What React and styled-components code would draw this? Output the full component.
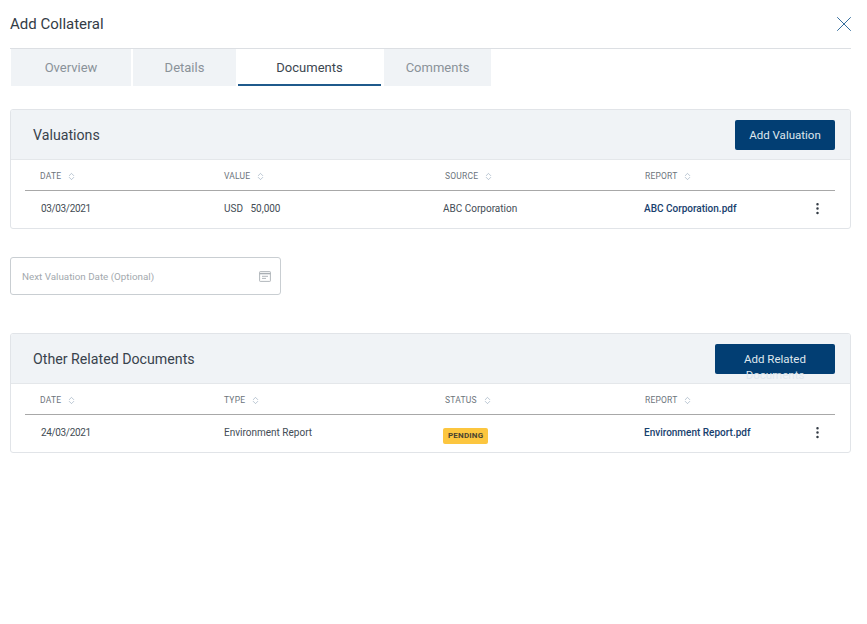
import React from 'react';
import styled, { createGlobalStyle } from 'styled-components';
import { X, EllipsisVertical, ChevronUp, ChevronDown } from 'lucide-react';

const GlobalStyle = createGlobalStyle`
    body {
        margin: 0;
        background: #ffffff;
        font-family: Roboto, "Noto Sans", sans-serif;
        color: #3c4650;
    }
`;

const Page = styled.div`
    width: 841px;
    padding: 0 16px 0 10px;
`;

const TitleBar = styled.header`
    height: 48px;
    display: flex;
    align-items: center;
    justify-content: space-between;
    border-bottom: 1px solid #dcdfe3;
`;

const Title = styled.h1`
    margin: 0;
    font-size: 15px;
    font-weight: 400;
    color: #333c46;
`;

const CloseButton = styled.button`
    border: 0;
    padding: 0;
    background: none;
    display: flex;
    margin-right: -6px;
    color: #2f6a9a;
`;

const Tabs = styled.nav`
    display: flex;
    height: 37px;
    padding-left: 1px;
`;

const Tab = styled.div`
    width: ${p => p.$width}px;
    margin-right: ${p => p.$gap}px;
    padding-top: 1px;
    display: flex;
    align-items: center;
    justify-content: center;
    font-size: 13px;
    color: ${p => (p.$active ? '#3c4650' : '#8a9299')};
    background: ${p => (p.$active ? '#ffffff' : '#f0f3f6')};
    border-bottom: 2px solid ${p => (p.$active ? '#1f5a8c' : 'transparent')};
`;

const Card = styled.section`
    margin-top: ${p => p.$top}px;
    height: 120px;
    box-sizing: border-box;
    border: 1px solid #e1e4e8;
    border-radius: 3px;
    overflow: hidden;
`;

const CardHeader = styled.div`
    height: 50px;
    box-sizing: border-box;
    display: flex;
    align-items: center;
    justify-content: space-between;
    padding: 0 15px 0 22px;
    background: #f0f3f6;
    border-bottom: 1px solid #e4e7ea;
`;

const CardTitle = styled.h2`
    margin: 0;
    font-size: 14.2px;
    font-weight: 400;
    color: #38424c;
`;

const PrimaryButton = styled.button`
    width: ${p => p.$width}px;
    height: 30px;
    box-sizing: border-box;
    padding: 7px 12px 0;
    display: flex;
    align-items: flex-start;
    justify-content: center;
    border: 0;
    border-radius: 2px;
    background: #023e73;
    color: #dfe7ee;
    font-family: inherit;
    font-size: 11.5px;
    line-height: 16px;
    text-align: center;
    align-self: flex-start;
    margin-top: 10px;
`;

const TableArea = styled.div`
    margin: 0 15px 0 14px;
`;

const Row = styled.div`
    display: grid;
    grid-template-columns: 199px 221px 200px 1fr 37px;
    align-items: center;
`;

const HeadRow = styled(Row)`
    height: 31px;
    box-sizing: border-box;
    padding-top: 2px;
    border-bottom: 1.5px solid #a8a8a8;
`;

const BodyRow = styled(Row)`
    height: 35px;
`;

const HeadCell = styled.div`
    display: flex;
    align-items: center;
    gap: 6px;
    padding-left: ${p => p.$indent || 0}px;
    font-size: 8.5px;
    color: #6c747b;
    letter-spacing: 0.2px;
`;

const SortIcon = styled.span`
    display: flex;
    flex-direction: column;
    color: #8ea3b7;
    svg {
        display: block;
        margin: -2.5px 0;
    }
`;

const Cell = styled.div`
    padding-left: ${p => p.$indent || 0}px;
    margin-left: ${p => p.$shift || 0}px;
    font-size: 10px;
    letter-spacing: ${p => (p.$numeric ? '-0.35px' : '0')};
    color: #434c55;
    white-space: pre;
`;

const FileLink = styled.a`
    margin-left: -1px;
    font-size: 10px;
    font-weight: 500;
    color: #17406d;
`;

const MoreButton = styled.div`
    display: flex;
    justify-content: flex-end;
    color: #333b44;
    padding-right: 10px;
`;

const Badge = styled.span`
    display: inline-block;
    margin-top: 6px;
    padding: 1px 5px;
    border-radius: 2px;
    background: #fcc63f;
    color: #4a4330;
    font-size: 8px;
    font-weight: 700;
    letter-spacing: 0.2px;
    line-height: 14px;
`;

const DateField = styled.div`
    margin-top: 28px;
    width: 271px;
    height: 38px;
    box-sizing: border-box;
    display: flex;
    align-items: center;
    justify-content: space-between;
    padding: 0 9px 0 11px;
    border: 1px solid #c9ced2;
    border-radius: 3px;
    font-size: 9.8px;
    color: #a3a9ae;
`;

const Sort = () => (
    <SortIcon>
        <ChevronUp size={9} strokeWidth={1.6} />
        <ChevronDown size={9} strokeWidth={1.6} />
    </SortIcon>
);

const CalendarIcon = () => (
    <svg width="12" height="12" viewBox="0 0 12 12" fill="none" stroke="#a9afb4" strokeWidth="0.9">
        <rect x="0.6" y="1.6" width="10.8" height="9.8" rx="0.6" />
        <path d="M0.6 3.6h10.8" strokeWidth="1.4" />
        <path d="M3 6.3h6M3 8.4h4" />
    </svg>
);

const DocTable = ({ headers, cells }) => (
    <TableArea>
        <HeadRow>
            {headers.map(h => (
                <HeadCell key={h} $indent={h === 'DATE' ? 15 : 0}>{h} <Sort /></HeadCell>
            ))}
        </HeadRow>
        <BodyRow>
            {cells}
            <MoreButton><EllipsisVertical size={15} strokeWidth={2} /></MoreButton>
        </BodyRow>
    </TableArea>
);

const App = () => (
    <Page>
        <GlobalStyle />
        <TitleBar>
            <Title>Add Collateral</Title>
            <CloseButton><X size={26} strokeWidth={0.9} /></CloseButton>
        </TitleBar>
        <Tabs>
            <Tab $width={120} $gap={2}>Overview</Tab>
            <Tab $width={103} $gap={2}>Details</Tab>
            <Tab $width={143} $gap={3} $active>Documents</Tab>
            <Tab $width={107} $gap={0}>Comments</Tab>
        </Tabs>
        <Card $top={23}>
            <CardHeader>
                <CardTitle>Valuations</CardTitle>
                <PrimaryButton $width={100}>Add Valuation</PrimaryButton>
            </CardHeader>
            <DocTable
                headers={['DATE', 'VALUE', 'SOURCE', 'REPORT']}
                cells={[
                    <Cell key="d" $indent={16} $numeric>03/03/2021</Cell>,
                    <Cell key="v">{'USD   50,000'}</Cell>,
                    <Cell key="s" $shift={-2}>ABC Corporation</Cell>,
                    <FileLink key="f">ABC Corporation.pdf</FileLink>,
                ]}
            />
        </Card>
        <DateField>
            Next Valuation Date (Optional)
            <CalendarIcon />
        </DateField>
        <Card $top={38}>
            <CardHeader>
                <CardTitle>Other Related Documents</CardTitle>
                <PrimaryButton $width={120}>Add Related Documents</PrimaryButton>
            </CardHeader>
            <DocTable
                headers={['DATE', 'TYPE', 'STATUS', 'REPORT']}
                cells={[
                    <Cell key="d" $indent={16} $numeric>24/03/2021</Cell>,
                    <Cell key="t">Environment Report</Cell>,
                    <Cell key="s" $shift={-2}><Badge>PENDING</Badge></Cell>,
                    <FileLink key="f">Environment Report.pdf</FileLink>,
                ]}
            />
        </Card>
    </Page>
);

export default App;
